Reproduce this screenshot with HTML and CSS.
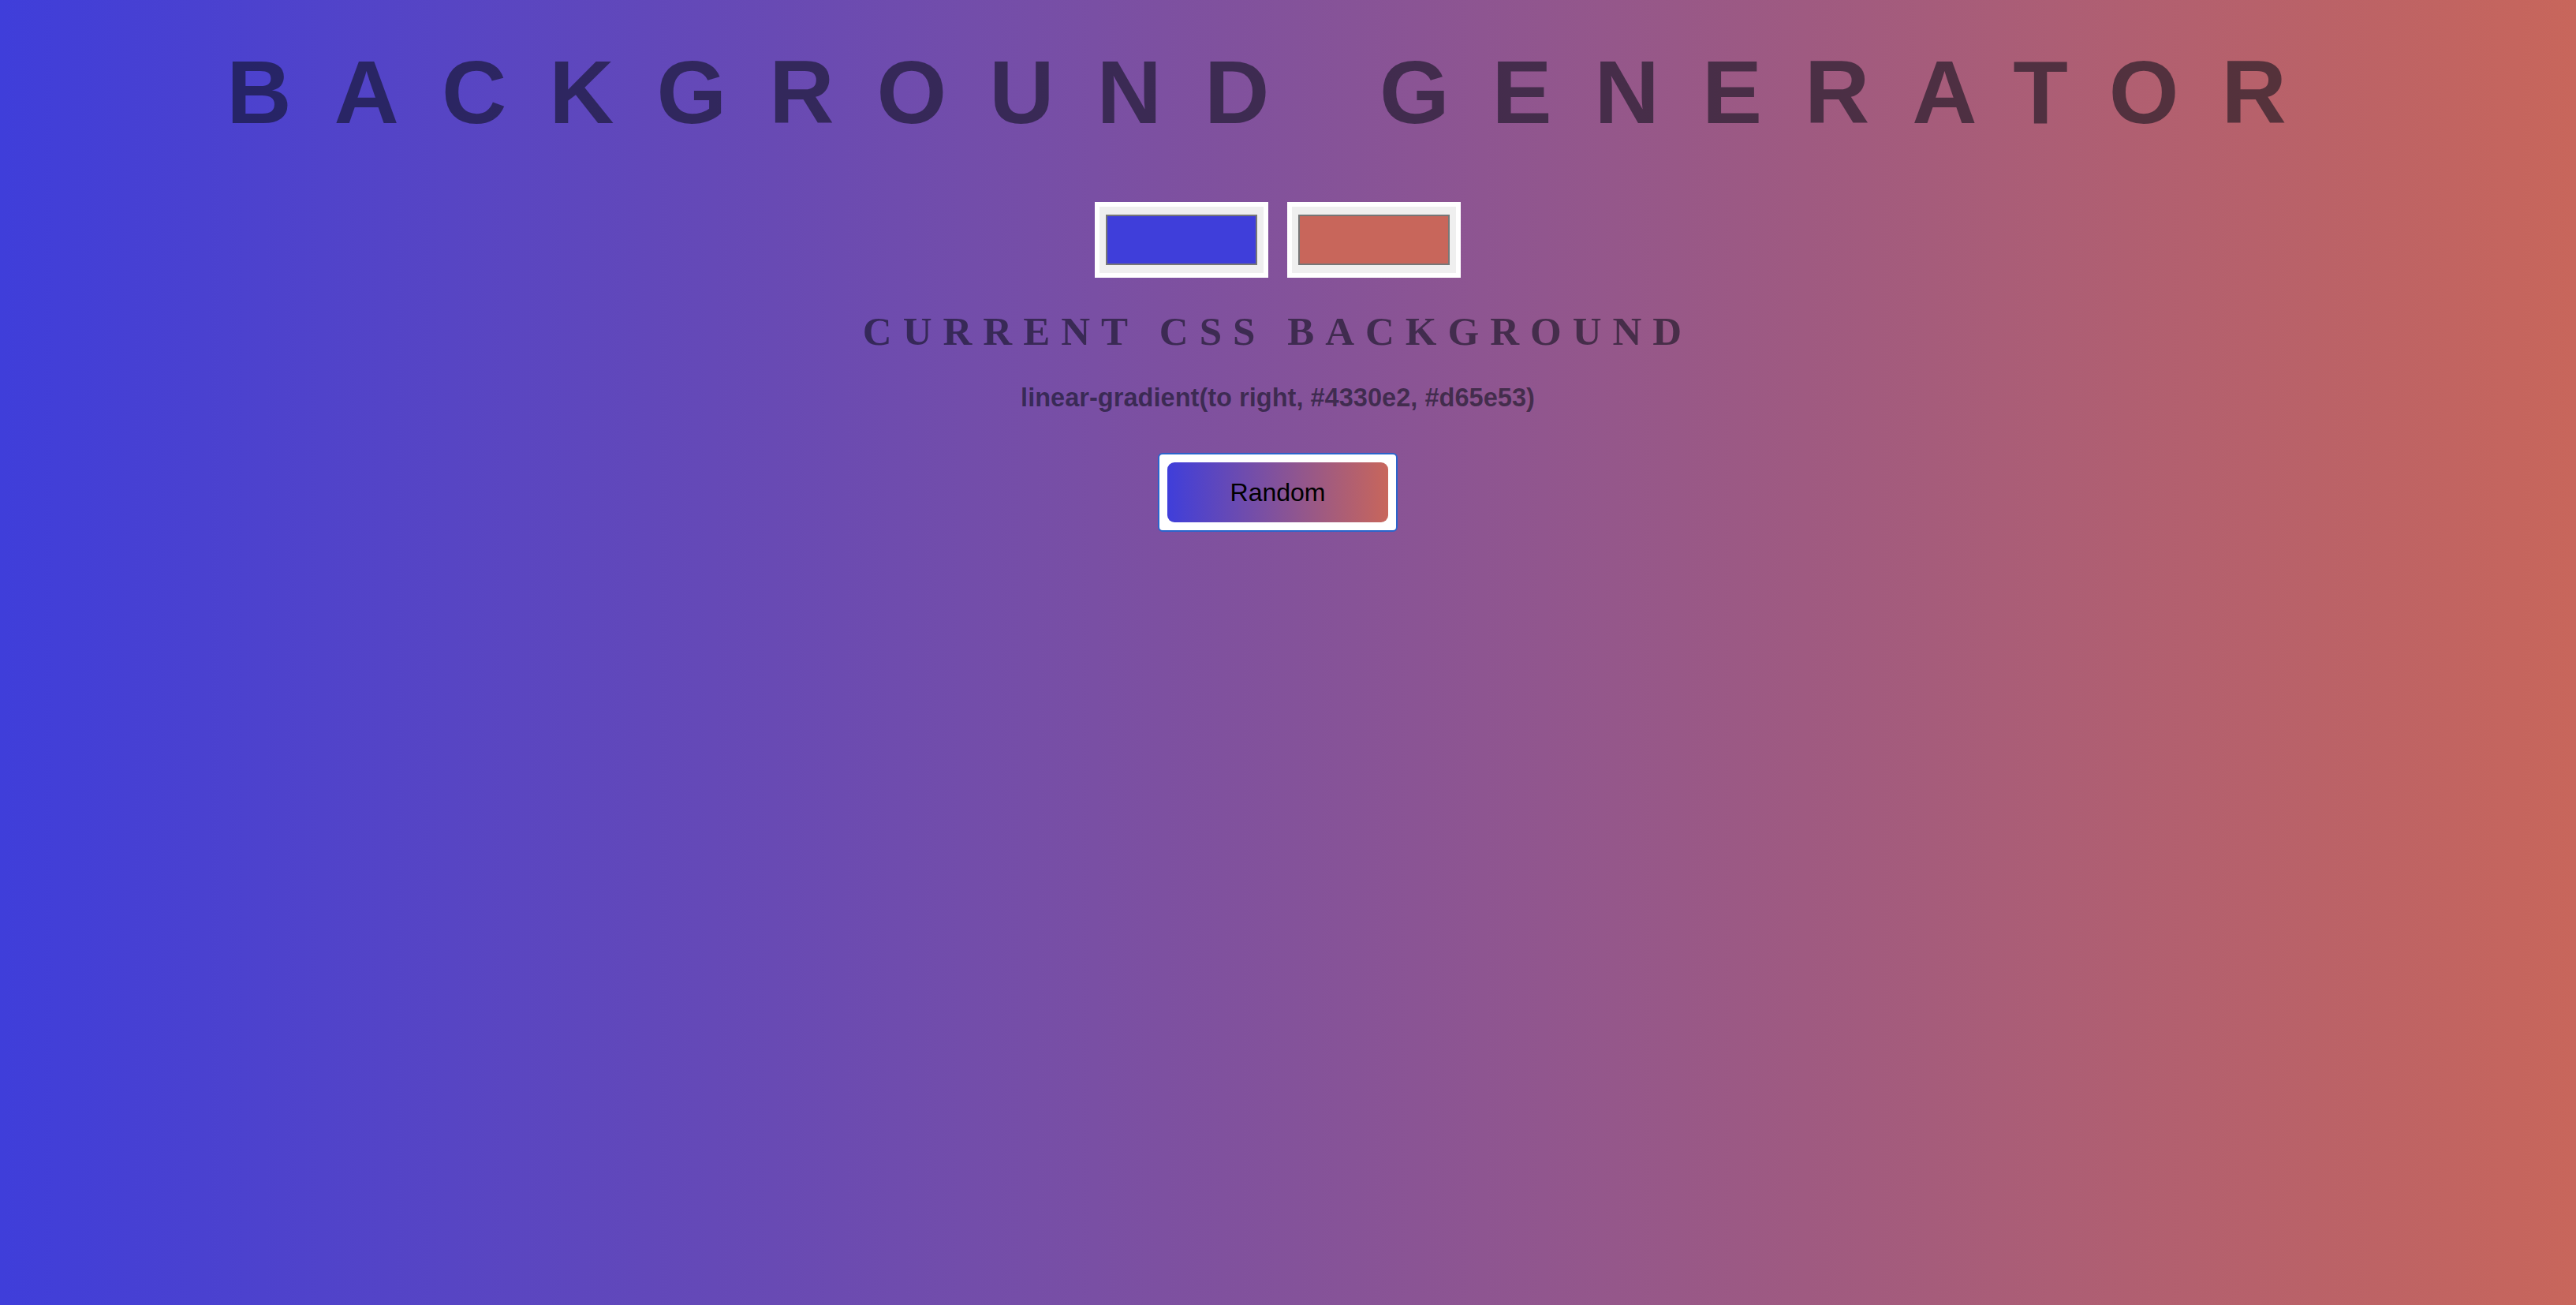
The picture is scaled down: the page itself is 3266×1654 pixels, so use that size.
FILE: index.html
```html
<!DOCTYPE html>
<html lang="en">
<head>
<meta charset="utf-8">
<title>Background Generator</title>
<link rel="stylesheet" href="styles.css">
</head>
<body>
<main class="page">
  <h1 class="title">BACKGROUND GENERATOR</h1>
  <div class="pickers">
    <div class="picker"><div class="swatch swatch-blue"></div></div>
    <div class="picker"><div class="swatch swatch-red"></div></div>
  </div>
  <h3 class="subtitle">CURRENT CSS BACKGROUND</h3>
  <p class="css-value">linear-gradient(to right, #4330e2, #d65e53)</p>
  <div class="focus-ring">
    <button class="random-btn" type="button">Random</button>
  </div>
</main>
</body>
</html>
```

FILE: styles.css
```css
html, body {
  margin: 0;
  padding: 0;
  height: 100%;
}

body {
  background: linear-gradient(to right, #3f3eda, #c8665b);
  font-family: "Liberation Sans", Arial, sans-serif;
}

.page {
  display: flex;
  flex-direction: column;
  align-items: center;
  padding: 52px 26px 0 0;
  min-height: 100%;
  box-sizing: border-box;
}

.title {
  margin: 0;
  font-family: "Liberation Sans", Arial, sans-serif;
  font-weight: bold;
  font-size: 114px;
  line-height: 130px;
  letter-spacing: 54px;
  color: rgba(10, 14, 24, 0.57);
  white-space: nowrap;
}

.pickers {
  display: flex;
  gap: 24px;
  margin-top: 74px;
}

.picker {
  border: 6px solid #ffffff;
  background: #efefef;
  padding: 10px 8px;
}

.swatch {
  width: 188px;
  height: 60px;
  border: 2px solid #777777;
}

.swatch-blue {
  background: #3f3eda;
}

.swatch-red {
  background: #c8665b;
}

.subtitle {
  margin: 38px 0 0 0;
  font-family: "Liberation Serif", "Times New Roman", serif;
  font-weight: bold;
  font-size: 51px;
  line-height: 60px;
  letter-spacing: 14px;
  color: rgba(10, 14, 24, 0.57);
  white-space: nowrap;
}

.css-value {
  margin: 34px 0 0 0;
  font-family: "Liberation Sans", Arial, sans-serif;
  font-weight: bold;
  font-size: 32.6px;
  line-height: 40px;
  color: rgba(10, 14, 24, 0.57);
  white-space: nowrap;
}

.focus-ring {
  margin-top: 50px;
  border: 2px solid #2a64cc;
  border-radius: 6px;
  background: #ffffff;
  padding: 10px;
  display: flex;
}

.random-btn {
  width: 280px;
  height: 76px;
  border: none;
  border-radius: 9px;
  background: linear-gradient(to right, #3f3eda, #c8665b);
  font-family: "Liberation Sans", Arial, sans-serif;
  font-size: 32px;
  color: #000000;
  padding: 0;
  display: flex;
  align-items: center;
  justify-content: center;
}
```
